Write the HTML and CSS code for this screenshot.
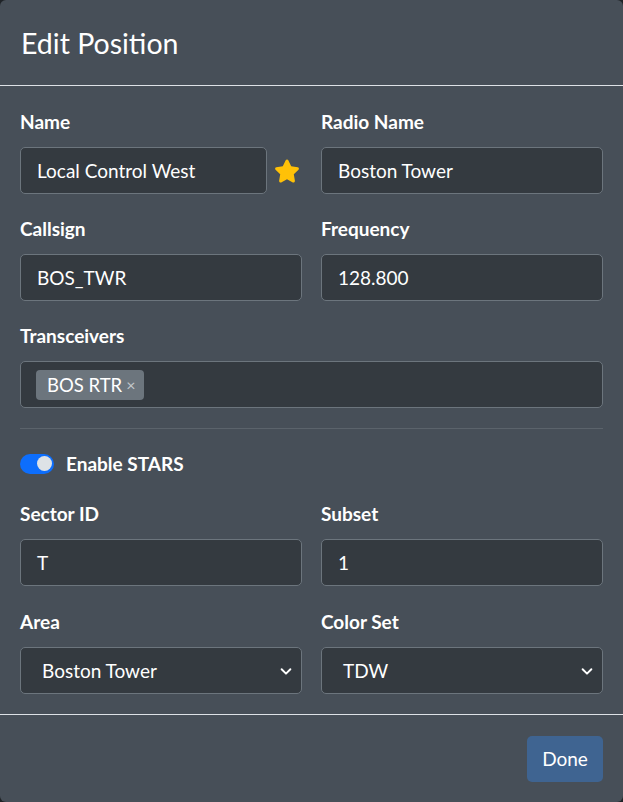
FILE: index.html
```html
<!DOCTYPE html>
<html>
<head>
<meta charset="utf-8">
<link rel="stylesheet" href="styles.css">
</head>
<body>
<div class="modal">
  <div class="modal-header">
    <h5 class="modal-title">Edit Position</h5>
  </div>
  <div class="modal-body">
    <div class="row">
      <div class="field">
        <label class="form-label">Name</label>
        <div class="name-group">
          <div class="form-control">Local Control West</div>
          <span class="star">
            <svg viewBox="0 0 576 512" width="26" height="26"><path fill="#ffc107" d="M316.9 18C311.6 7 300.4 0 288.1 0s-23.4 7-28.8 18L195 150.3 51.4 171.5c-12 1.8-22 10.2-25.7 21.7s-.7 24.2 7.9 32.7L137.8 329 113.2 474.7c-2 12 3 24.2 12.9 31.3s23 8 33.8 2.3l128.3-68.5 128.3 68.5c10.8 5.7 23.9 4.9 33.8-2.3s14.9-19.3 12.9-31.3L438.5 329 542.7 225.9c8.6-8.5 11.7-21.2 7.9-32.7s-13.7-19.9-25.7-21.7L381.2 150.3 316.9 18z"/></svg>
          </span>
        </div>
      </div>
      <div class="field">
        <label class="form-label">Radio Name</label>
        <div class="form-control">Boston Tower</div>
      </div>
    </div>
    <div class="row">
      <div class="field">
        <label class="form-label">Callsign</label>
        <div class="form-control">BOS_TWR</div>
      </div>
      <div class="field">
        <label class="form-label">Frequency</label>
        <div class="form-control">128.800</div>
      </div>
    </div>
    <div class="field single">
      <label class="form-label">Transceivers</label>
      <div class="form-control tags">
        <span class="tag">BOS RTR <span class="tag-x">×</span></span>
      </div>
    </div>
    <hr class="divider">
    <div class="switch-row">
      <span class="switch"><span class="knob"></span></span>
      <span class="switch-label">Enable STARS</span>
    </div>
    <div class="row gap23">
      <div class="field">
        <label class="form-label">Sector ID</label>
        <div class="form-control">T</div>
      </div>
      <div class="field">
        <label class="form-label">Subset</label>
        <div class="form-control">1</div>
      </div>
    </div>
    <div class="row last">
      <div class="field">
        <label class="form-label">Area</label>
        <div class="form-select">Boston Tower
          <svg class="chev" viewBox="0 0 16 16" width="14" height="14"><path fill="none" stroke="#fff" stroke-width="2.2" stroke-linecap="round" stroke-linejoin="round" d="M3 6l5 5 5-5"/></svg>
        </div>
      </div>
      <div class="field">
        <label class="form-label">Color Set</label>
        <div class="form-select">TDW
          <svg class="chev" viewBox="0 0 16 16" width="14" height="14"><path fill="none" stroke="#fff" stroke-width="2.2" stroke-linecap="round" stroke-linejoin="round" d="M3 6l5 5 5-5"/></svg>
        </div>
      </div>
    </div>
  </div>
  <div class="modal-footer">
    <button class="btn">Done</button>
  </div>
</div>
</body>
</html>
```

FILE: styles.css
```css
* { box-sizing: border-box; }
html, body { margin: 0; padding: 0; }
body {
  background: #1f2327;
  font-family: "Lato", "Noto Sans", sans-serif;
  font-size: 19px;
  color: #fff;
  width: 623px;
  height: 802px;
}
.modal {
  width: 623px;
  height: 802px;
  background: #474f58;
  border-radius: 6px;
  display: flex;
  flex-direction: column;
}
.modal-header {
  height: 86px;
  padding: 0 21px;
  display: flex;
  align-items: center;
  border-bottom: 1px solid #dee2e6;
}
.modal-title {
  margin: 0;
  font-size: 28.5px;
  font-weight: 400;
  line-height: 1.2;
  padding-top: 2px;
}
.modal-body {
  padding: 23px 20px 0 20px;
  flex: 1;
  border-bottom: 1px solid #dee2e6;
}
.row {
  display: grid;
  grid-template-columns: 1fr 1fr;
  column-gap: 19px;
  margin-bottom: 22px;
}
.row.gap23 { margin-bottom: 23px; }
.row.last { margin-bottom: 0; }
.field.single { margin-bottom: 0; }
.form-label {
  display: block;
  font-weight: 700;
  line-height: 27px;
  margin-top: -1px;
  margin-bottom: 12px;
}
.form-control, .form-select {
  height: 47px;
  background: #343a40;
  border: 1px solid #6c757d;
  border-radius: 5px;
  padding: 0 16px;
  display: flex;
  align-items: center;
  color: #fff;
}
.form-select {
  padding-left: 21px;
  justify-content: space-between;
  padding-right: 8px;
}
.name-group {
  display: flex;
  align-items: center;
}
.name-group .form-control { flex: 1; }
.star {
  width: 35px;
  display: flex;
  justify-content: center;
  padding-left: 5px;
}
.tags { padding-left: 15px; }
.tag {
  background: #6c757d;
  border-radius: 4px;
  padding: 0 8px 0 11px;
  height: 30px;
  display: inline-flex;
  align-items: center;
  font-size: 18.5px;
}
.tag-x {
  color: #c4c8cc;
  font-size: 16px;
  margin-left: 4px;
}
.divider {
  border: 0;
  border-top: 1px solid #5b636b;
  margin: 20px 0 0 0;
}
.switch-row {
  display: flex;
  align-items: center;
  height: 72px;
  padding-bottom: 3px;
}
.switch {
  width: 34px;
  height: 20px;
  border-radius: 10px;
  background: #0d6efd;
  display: flex;
  align-items: center;
  justify-content: flex-end;
  padding-right: 2px;
}
.knob {
  width: 15px;
  height: 15px;
  border-radius: 50%;
  background: #dee2e6;
}
.switch-label {
  font-weight: 700;
  margin-left: 12px;
}
.modal-footer {
  height: 87px;
  display: flex;
  justify-content: flex-end;
  align-items: center;
  padding: 0 20px 0 0;
}
.btn {
  width: 76px;
  height: 46px;
  background: #3f6491;
  border: 0;
  border-radius: 5px;
  color: #fff;
  font-family: inherit;
  font-size: 19px;
}
```
